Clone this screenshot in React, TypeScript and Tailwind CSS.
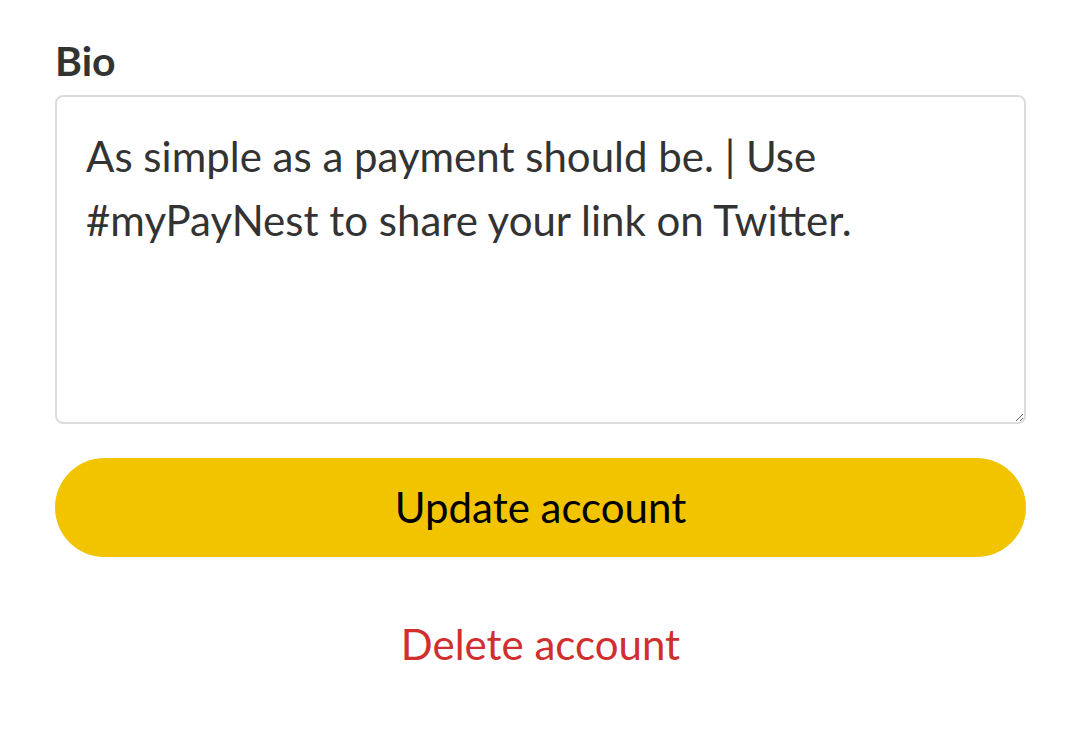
import React from "react";

export default function App() {
  return (
    <div className="w-[1080px] h-[740px] bg-white font-['Lato',sans-serif] text-[#333333]">
      <div className="pl-[55px] pr-[54px] pt-[36px] flex flex-col">
        <label className="text-[41px] font-bold leading-[50px] text-[#333333]">Bio</label>
        <textarea
          className="mt-[9px] h-[329px] w-full rounded-[8px] border-2 border-[#dcdcdc] px-[29px] pt-[27px] text-[42px] leading-[64px] text-[#333333] outline-none resize-y font-['Lato',sans-serif]"
          defaultValue="As simple as a payment should be. | Use #myPayNest to share your link on Twitter."
        />
        <button className="mt-[34px] h-[99px] w-full rounded-full bg-[#f2c400] text-[42px] text-black">
          Update account
        </button>
        <div className="mt-[62px] text-center text-[42px] leading-[50px] text-[#d12e2e]">Delete account</div>
      </div>
    </div>
  );
}
